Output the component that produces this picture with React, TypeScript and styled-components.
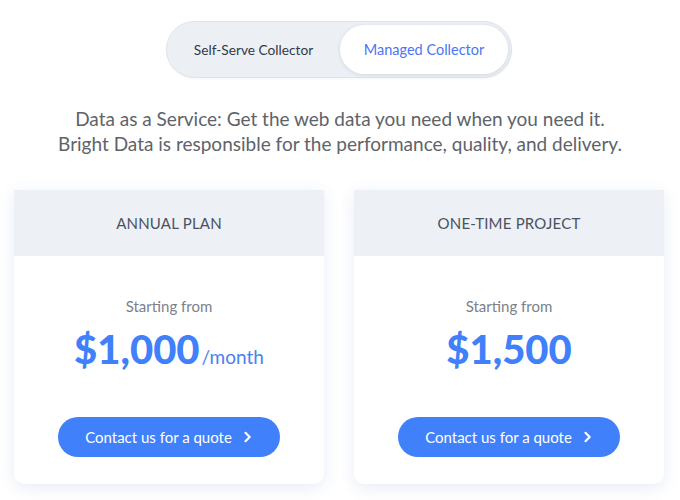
import React, { FC, useState } from 'react';
import styled, { createGlobalStyle } from 'styled-components';

const GlobalStyle = createGlobalStyle`
	html, body {
		margin: 0;
		padding: 0;
		background: #ffffff;
		font-family: Lato, "Open Sans", sans-serif;
	}
`

interface Plan {
	title: string
	price: string
	period?: string
}

const plans: Plan[] = [
	{ title: 'ANNUAL PLAN', price: '$1,000', period: '/month' },
	{ title: 'ONE-TIME PROJECT', price: '$1,500' },
]

const Chevron: FC = () => (
	<svg width="11" height="12" viewBox="0 0 11 12" fill="none">
		<path d="M3.5 1.8l4.2 4.2-4.2 4.2" stroke="#ffffff" strokeWidth="2.2" strokeLinecap="round" strokeLinejoin="round" />
	</svg>
)

const App: FC = () => {
	const [mode, setMode] = useState<'self' | 'managed'>('managed');

	return (
		<>
			<GlobalStyle />
			<Page>
				<Toggle>
					<ToggleOption active={mode === 'self'} onClick={() => setMode('self')}>
						Self-Serve Collector
					</ToggleOption>
					<ToggleOption active={mode === 'managed'} onClick={() => setMode('managed')}>
						Managed Collector
					</ToggleOption>
				</Toggle>

				<Description>
					Data as a Service: Get the web data you need when you need it.<br />
					Bright Data is responsible for the performance, quality, and delivery.
				</Description>

				<Cards>
					{plans.map((plan) => (
						<Card key={plan.title}>
							<CardHeader>{plan.title}</CardHeader>
							<CardBody>
								<Starting>Starting from</Starting>
								<Price>
									{plan.price}
									{plan.period && <Period>{plan.period}</Period>}
								</Price>
								<QuoteButton>
									Contact us for a quote
									<Chevron />
								</QuoteButton>
							</CardBody>
						</Card>
					))}
				</Cards>
			</Page>
		</>
	)
}

export default App;


const Page = styled.div`
	width: 680px;
	height: 500px;
	box-sizing: border-box;
	padding-top: 21px;
	display: flex;
	flex-direction: column;
	align-items: center;
	overflow: hidden;
`

const Toggle = styled.div`
	display: flex;
	align-items: center;
	box-sizing: border-box;
	width: 346px;
	height: 57px;
	padding: 3px 3px 3px 0;
	margin-right: 2px;
	background: #eceff4;
	border: 1px solid #dfe4ec;
	border-radius: 29px;
	box-shadow: 0 1px 3px rgba(0, 0, 0, 0.04);
`

const ToggleOption = styled.button<{ active: boolean }>`
	cursor: pointer;
	flex: ${p => p.active ? '0 0 168px' : '1'};
	height: 100%;
	border: none;
	border-radius: 25px;
	font-family: Lato, "Open Sans", sans-serif;
	font-size: ${p => p.active ? '14.5px' : '13.7px'};
	background: ${p => p.active ? '#ffffff' : 'transparent'};
	color: ${p => p.active ? '#4d74f4' : '#333a44'};
	box-shadow: ${p => p.active ? '0 1px 4px rgba(40, 60, 100, 0.12)' : 'none'};
`

const Description = styled.p`
	margin: 28px 0 0;
	text-align: center;
	font-size: 19px;
	line-height: 25px;
	color: #5e636a;
`

const Cards = styled.div`
	display: grid;
	grid-template-columns: 310px 310px;
	gap: 30px;
	margin-top: 34px;
	margin-left: -2px;
`

const Card = styled.div`
	display: flex;
	flex-direction: column;
	height: 294px;
	background: #ffffff;
	border-radius: 0 0 10px 10px;
	box-shadow: 0 4px 16px rgba(60, 100, 180, 0.12);
	overflow: hidden;
`

const CardHeader = styled.div`
	height: 66px;
	display: flex;
	align-items: center;
	justify-content: center;
	background: #edf0f5;
	font-size: 15px;
	letter-spacing: 0.2px;
	color: #4a5262;
`

const CardBody = styled.div`
	flex: 1;
	display: flex;
	flex-direction: column;
	align-items: center;
	padding-top: 41px;
`

const Starting = styled.div`
	font-size: 15px;
	line-height: 18px;
	color: #7b818a;
`

const Price = styled.div`
	margin-top: 11px;
	height: 46px;
	font-size: 40px;
	font-weight: 900;
	line-height: 46px;
	color: #4180fb;
	white-space: nowrap;
`

const Period = styled.span`
	margin-left: 2px;
	font-size: 19px;
	font-weight: 400;
	color: #4a7ff0;
`

const QuoteButton = styled.button`
	cursor: pointer;
	margin-top: 45px;
	height: 40px;
	padding: 0 27px;
	display: flex;
	align-items: center;
	gap: 10px;
	border: none;
	border-radius: 20px;
	background: #4180fb;
	color: #ffffff;
	font-family: Lato, "Open Sans", sans-serif;
	font-size: 15px;
`
